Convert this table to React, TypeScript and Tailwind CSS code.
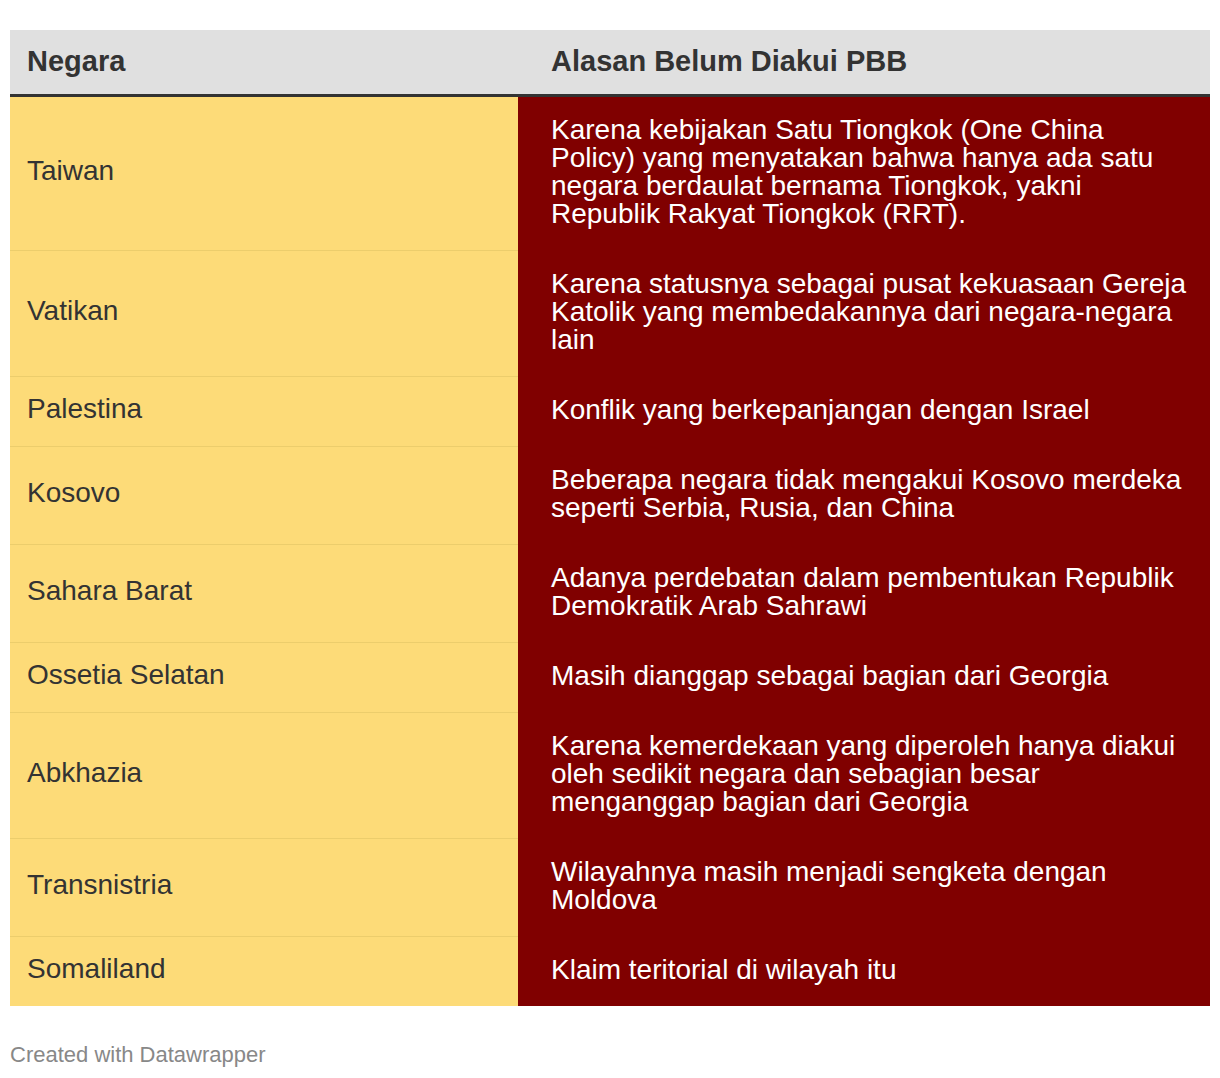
const rows: [string, string][] = [
  [
    'Taiwan',
    'Karena kebijakan Satu Tiongkok (One China Policy) yang menyatakan bahwa hanya ada satu negara berdaulat bernama Tiongkok, yakni Republik Rakyat Tiongkok (RRT).',
  ],
  ['Vatikan', 'Karena statusnya sebagai pusat kekuasaan Gereja Katolik yang membedakannya dari negara-negara lain'],
  ['Palestina', 'Konflik yang berkepanjangan dengan Israel'],
  ['Kosovo', 'Beberapa negara tidak mengakui Kosovo merdeka seperti Serbia, Rusia, dan China'],
  ['Sahara Barat', 'Adanya perdebatan dalam pembentukan Republik Demokratik Arab Sahrawi'],
  ['Ossetia Selatan', 'Masih dianggap sebagai bagian dari Georgia'],
  [
    'Abkhazia',
    'Karena kemerdekaan yang diperoleh hanya diakui oleh sedikit negara dan sebagian besar menganggap bagian dari Georgia',
  ],
  ['Transnistria', 'Wilayahnya masih menjadi sengketa dengan Moldova'],
  ['Somaliland', 'Klaim teritorial di wilayah itu'],
];

export default function App() {
  return (
    <div className="min-h-[1078px] bg-white px-[10px] pt-[30px] font-['Liberation_Sans',Arial,sans-serif]">
      {/* Header */}
      <div className="flex h-[67px] border-b-[3px] border-[#333333] bg-[#e0e0e0] pb-[3px] text-[29px] font-bold leading-[32px] text-[#333333]">
        <div className="flex w-[508px] items-center pl-[17px]">Negara</div>
        <div className="flex flex-1 items-center pl-[33px]">Alasan Belum Diakui PBB</div>
      </div>

      {/* Body */}
      {rows.map(([country, reason], i) => {
        const last = i === rows.length - 1;
        return (
          <div key={country} className="flex text-[28px] leading-[28px]">
            <div
              className={`flex w-[508px] items-center bg-[#fddb78] pb-[6px] pl-[17px] text-[#333333] ${
                last ? '' : 'border-b border-[#eccd6c]'
              }`}
            >
              {country}
            </div>
            <div
              className={`flex-1 bg-[#800000] pl-[33px] pr-[22px] pt-[19px] text-white ${
                last ? 'pb-[22px]' : 'border-b border-[#800000] pb-[22px]'
              }`}
            >
              {reason}
            </div>
          </div>
        );
      })}

      <div className="pt-[36px] text-[22px] leading-[26px] text-[#888888]">Created with Datawrapper</div>
    </div>
  );
}
